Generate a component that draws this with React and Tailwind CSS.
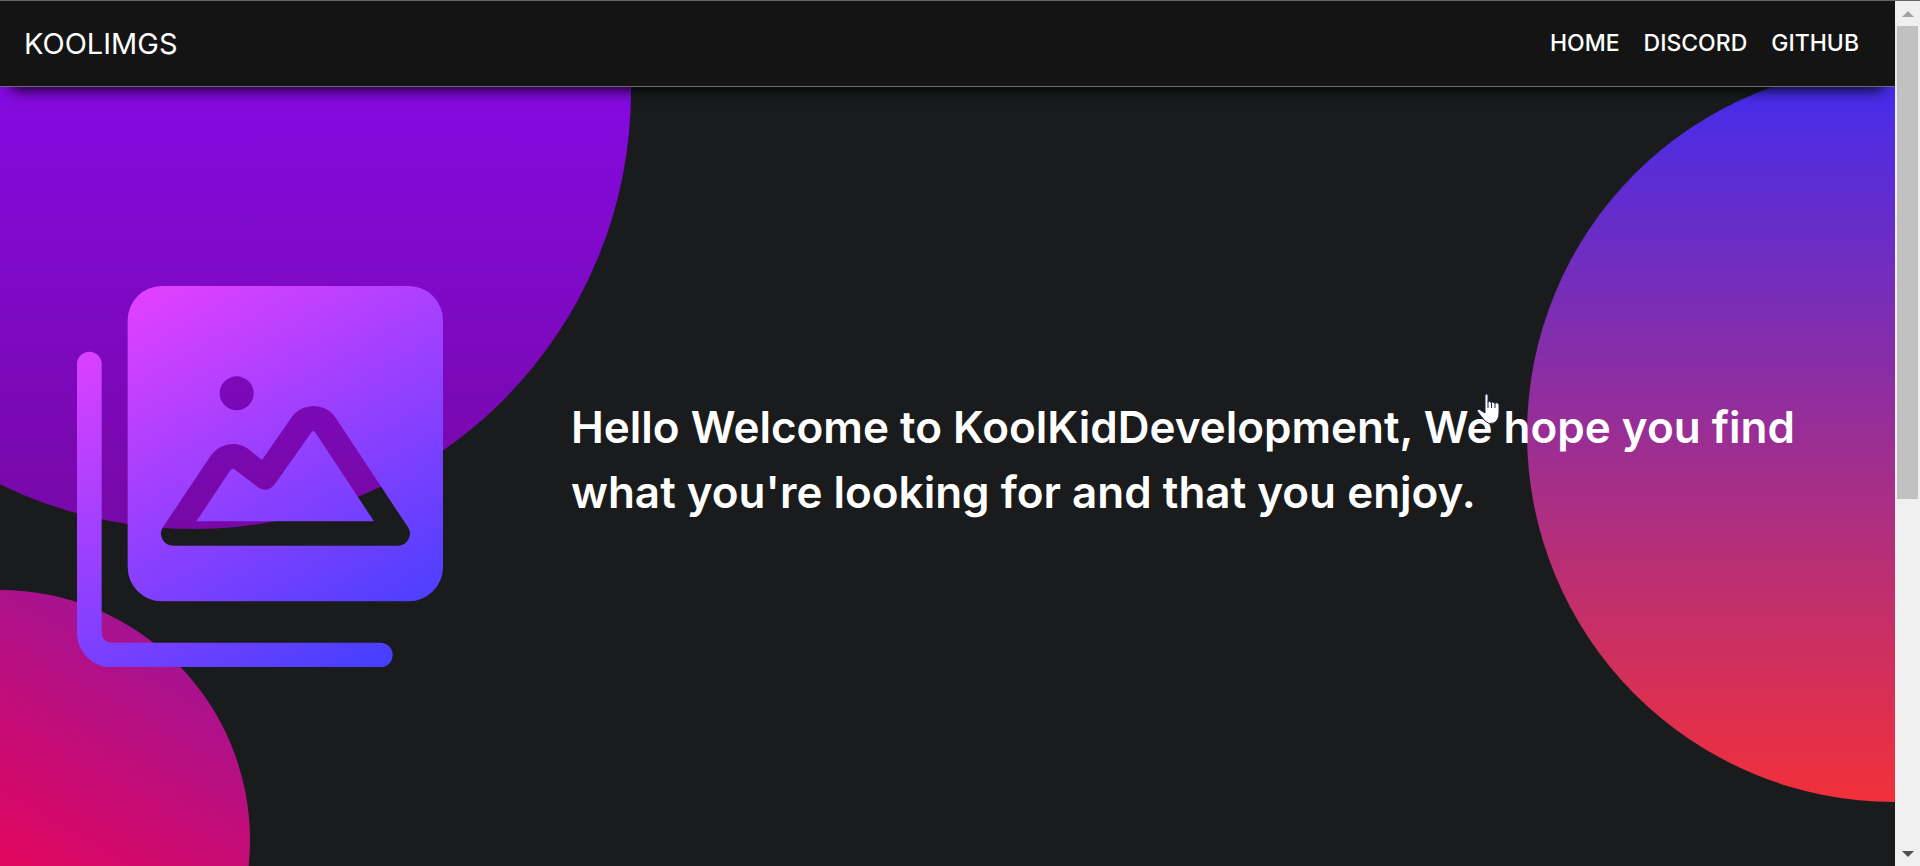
const links = [
  { label: "HOME", href: "#home" },
  { label: "DISCORD", href: "#discord" },
  { label: "GITHUB", href: "#github" },
];

function GalleryLogo() {
  return (
    <svg viewBox="51 49 1098 1144" className="w-[366px] shrink-0" aria-hidden="true">
      <defs>
        <linearGradient id="card" gradientUnits="userSpaceOnUse" x1="240" y1="80" x2="840" y2="1124">
          <stop offset="0" stopColor="#e040ff" />
          <stop offset="1" stopColor="#4f3fff" />
        </linearGradient>
        <linearGradient id="corner" gradientUnits="userSpaceOnUse" x1="60" y1="240" x2="682" y2="1343">
          <stop offset="0" stopColor="#dc40ff" />
          <stop offset="1" stopColor="#463fff" />
        </linearGradient>
      </defs>
      <path
        fill="url(#card)"
        fillRule="evenodd"
        d="M306 49H1046A103 103 0 0 1 1149 152V892A103 103 0 0 1 1046 995H306A103 103 0 0 1 203 892V152A103 103 0 0 1 306 49Z
           M530 320A51 51 0 1 0 530 422A51 51 0 1 0 530 320Z
           M339 828A36 36 0 0 1 309 772L451 560C477 521 534 507 575 546L606 571L697 440C729 399 792 399 824 440L1042 770A36 36 0 0 1 1013 828Z
           M409 755L511 602Q517 593 525 600L590 650C608 665 630 664 645 643L753 490Q760 478 767 490L942 755Z"
      />
      <path
        fill="url(#corner)"
        d="M51 283A37 37 0 0 1 125 283V1090A29 29 0 0 0 154 1119H961A37 37 0 0 1 961 1193H154A103 103 0 0 1 51 1090Z"
      />
    </svg>
  );
}

function HandPointer() {
  return (
    <svg viewBox="0 0 24 32" className="pointer-events-none absolute left-[1476px] top-[306px] w-6" aria-hidden="true">
      <path
        fill="#fff"
        stroke="#23264a"
        strokeWidth="1"
        d="M9 2Q10.500 0 12 2V9Q13.500 7.500 15 9.500Q17 8 18.500 10.200Q21 8.800 23 11V20Q23 27 18 30Q13 32 9 28L1 18Q1 16 3.500 16.500L9 20Z"
      />
      <path stroke="#23264a" strokeWidth="1" d="M12 8V15M15.500 9V15M19 10V15" />
    </svg>
  );
}

function Scrollbar() {
  return (
    <div className="flex w-[25px] shrink-0 flex-col items-center bg-[#f0f0f0]" aria-hidden="true">
      <div className="flex h-[25px] items-center justify-center">
        <svg viewBox="0 0 12 6" className="w-3">
          <path fill="#a3a3a3" d="M6 0L12 6H0Z" />
        </svg>
      </div>
      <div className="flex w-[21px] grow flex-col">
        <div className="basis-[58%] bg-[#c1c1c1]" />
      </div>
      <div className="flex h-[25px] items-center justify-center">
        <svg viewBox="0 0 12 6" className="w-3">
          <path fill="#505050" d="M0 0H12L6 6Z" />
        </svg>
      </div>
    </div>
  );
}

export default function App() {
  return (
    <div className="flex min-h-screen border-t border-[#666666] bg-[#191b1c] font-[Inter,sans-serif] text-white">
      <div className="flex min-w-0 grow flex-col">
        <header className="relative z-10 flex h-[86px] shrink-0 items-center justify-between border-b border-[#6c6c6c] bg-[#141414] pl-6 pr-9 shadow-[0_14px_14px_-12px_#000000]">
          <a href="#home" className="text-[29px]">KOOLIMGS</a>
          <nav className="flex gap-6 text-[23px] font-medium">
            {links.map((link) => (
              <a key={link.label} href={link.href}>{link.label}</a>
            ))}
          </nav>
        </header>
        <main className="relative flex grow items-center gap-32 overflow-hidden pl-[77px] pr-16">
          <div className="absolute -left-[245px] -top-[434px] size-[876px] rounded-full bg-linear-to-b/srgb from-[#900cff] via-[#840ae0] to-[#7808a6]" />
          <div className="absolute -left-[250px] top-[503px] size-[500px] rounded-full bg-[linear-gradient(30deg,#ff0045_28%,#a01496_90%)]" />
          <div className="absolute -right-[368px] -top-[21px] size-[736px] rounded-full bg-linear-to-b/srgb from-[#412cf0] to-[#f2303a]" />
          <div className="relative shrink-0">
            <GalleryLogo />
          </div>
          <h1 className="relative pb-[34px] text-[44px] font-semibold leading-[65px]">
            Hello Welcome to KoolKidDevelopment, We hope you find what you're looking for and that you enjoy.
          </h1>
          <HandPointer />
        </main>
      </div>
      <Scrollbar />
    </div>
  );
}
